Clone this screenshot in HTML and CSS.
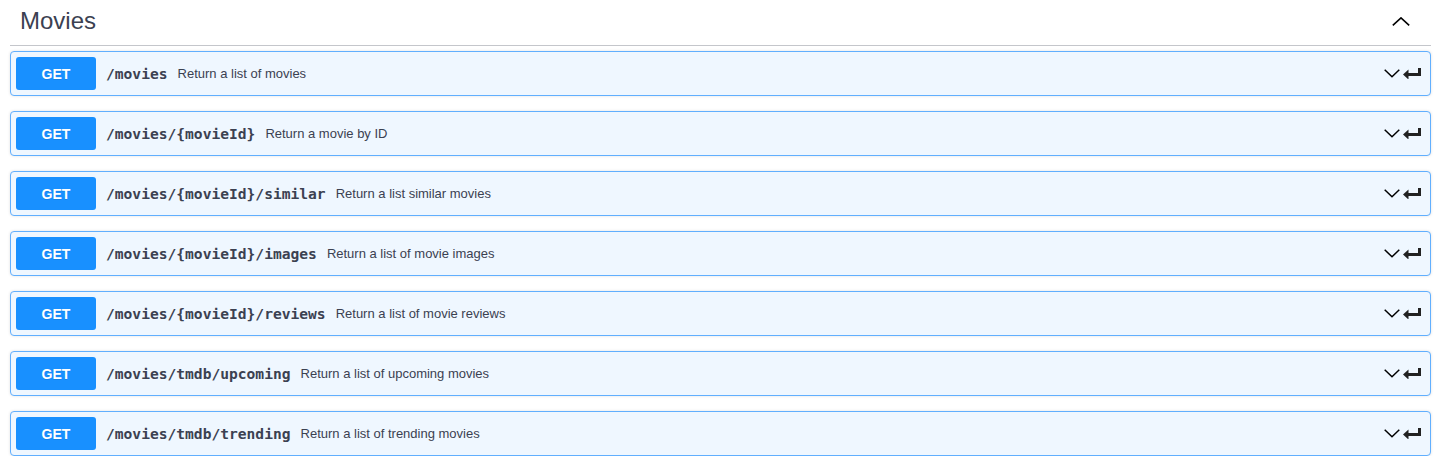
FILE: index.html
```html
<!DOCTYPE html>
<html lang="en">
<head>
<meta charset="utf-8">
<title>Movies</title>
<link rel="stylesheet" href="styles.css">
</head>
<body>
<div class="tag-section">
  <h3 class="tag-header">
    <span class="tag-name">Movies</span>
    <span class="tag-toggle">
      <svg width="18" height="9" viewBox="0 0 18 9"><polyline points="0.8,8.3 9,0.9 17.2,8.3" fill="none" stroke="#000" stroke-width="1.6"/></svg>
    </span>
  </h3>
  <div class="ops">
    <div class="opblock"><div class="summary"><span class="method">GET</span><span class="path">/movies</span><span class="desc">Return a list of movies</span><span class="controls"><svg class="chev" width="16" height="9" viewBox="0 0 16 9"><polyline points="0.7,0.8 8,7.8 15.3,0.8" fill="none" stroke="#000" stroke-width="1.5"/></svg><svg class="ret" width="18" height="11" viewBox="0 0 18 11"><path d="M15 0h3v8H15zM5 5h13v3H5zM0 6.5L5.5 1.5V11.5z" fill="#222"/></svg></span></div></div>
    <div class="opblock"><div class="summary"><span class="method">GET</span><span class="path">/movies/{movieId}</span><span class="desc">Return a movie by ID</span><span class="controls"><svg class="chev" width="16" height="9" viewBox="0 0 16 9"><polyline points="0.7,0.8 8,7.8 15.3,0.8" fill="none" stroke="#000" stroke-width="1.5"/></svg><svg class="ret" width="18" height="11" viewBox="0 0 18 11"><path d="M15 0h3v8H15zM5 5h13v3H5zM0 6.5L5.5 1.5V11.5z" fill="#222"/></svg></span></div></div>
    <div class="opblock"><div class="summary"><span class="method">GET</span><span class="path">/movies/{movieId}/similar</span><span class="desc">Return a list similar movies</span><span class="controls"><svg class="chev" width="16" height="9" viewBox="0 0 16 9"><polyline points="0.7,0.8 8,7.8 15.3,0.8" fill="none" stroke="#000" stroke-width="1.5"/></svg><svg class="ret" width="18" height="11" viewBox="0 0 18 11"><path d="M15 0h3v8H15zM5 5h13v3H5zM0 6.5L5.5 1.5V11.5z" fill="#222"/></svg></span></div></div>
    <div class="opblock"><div class="summary"><span class="method">GET</span><span class="path">/movies/{movieId}/images</span><span class="desc">Return a list of movie images</span><span class="controls"><svg class="chev" width="16" height="9" viewBox="0 0 16 9"><polyline points="0.7,0.8 8,7.8 15.3,0.8" fill="none" stroke="#000" stroke-width="1.5"/></svg><svg class="ret" width="18" height="11" viewBox="0 0 18 11"><path d="M15 0h3v8H15zM5 5h13v3H5zM0 6.5L5.5 1.5V11.5z" fill="#222"/></svg></span></div></div>
    <div class="opblock"><div class="summary"><span class="method">GET</span><span class="path">/movies/{movieId}/reviews</span><span class="desc">Return a list of movie reviews</span><span class="controls"><svg class="chev" width="16" height="9" viewBox="0 0 16 9"><polyline points="0.7,0.8 8,7.8 15.3,0.8" fill="none" stroke="#000" stroke-width="1.5"/></svg><svg class="ret" width="18" height="11" viewBox="0 0 18 11"><path d="M15 0h3v8H15zM5 5h13v3H5zM0 6.5L5.5 1.5V11.5z" fill="#222"/></svg></span></div></div>
    <div class="opblock"><div class="summary"><span class="method">GET</span><span class="path">/movies/tmdb/upcoming</span><span class="desc">Return a list of upcoming movies</span><span class="controls"><svg class="chev" width="16" height="9" viewBox="0 0 16 9"><polyline points="0.7,0.8 8,7.8 15.3,0.8" fill="none" stroke="#000" stroke-width="1.5"/></svg><svg class="ret" width="18" height="11" viewBox="0 0 18 11"><path d="M15 0h3v8H15zM5 5h13v3H5zM0 6.5L5.5 1.5V11.5z" fill="#222"/></svg></span></div></div>
    <div class="opblock"><div class="summary"><span class="method">GET</span><span class="path">/movies/tmdb/trending</span><span class="desc">Return a list of trending movies</span><span class="controls"><svg class="chev" width="16" height="9" viewBox="0 0 16 9"><polyline points="0.7,0.8 8,7.8 15.3,0.8" fill="none" stroke="#000" stroke-width="1.5"/></svg><svg class="ret" width="18" height="11" viewBox="0 0 18 11"><path d="M15 0h3v8H15zM5 5h13v3H5zM0 6.5L5.5 1.5V11.5z" fill="#222"/></svg></span></div></div>
  </div>
</div>
</body>
</html>
```

FILE: styles.css
```css
html, body {
  margin: 0;
  padding: 0;
  background: #fff;
}

body {
  font-family: "Liberation Sans", Arial, sans-serif;
  color: #3b4151;
}

.tag-section {
  margin: 0 10px;
}

.tag-header {
  display: flex;
  align-items: center;
  margin: 0 0 5px;
  padding: 7px 21px 10px 10px;
  border-bottom: 1px solid #c4c6cb;
  font-size: 24px;
  font-weight: normal;
  line-height: 28px;
  color: #3b4151;
}

.tag-name {
  flex: 1;
}

.tag-toggle {
  display: flex;
  align-items: center;
  height: 28px;
}

.tag-toggle svg {
  display: block;
  margin-top: 1px;
}

.ops {
  display: flex;
  flex-direction: column;
  gap: 15px;
}

.opblock {
  border: 1px solid #61affe;
  border-radius: 4px;
  background: #eff7ff;
  box-shadow: 0 0 3px rgba(0, 0, 0, 0.12);
}

.summary {
  display: flex;
  align-items: center;
  padding: 5px;
}

.method {
  display: flex;
  align-items: center;
  justify-content: center;
  width: 80px;
  height: 33px;
  border-radius: 3px;
  background: #1890ff;
  color: #fff;
  font-size: 14px;
  font-weight: bold;
  text-shadow: 0 1px 0 rgba(0, 0, 0, 0.1);
}

.path {
  padding: 0 10px;
  font-family: "DejaVu Sans Mono", monospace;
  font-weight: bold;
  font-size: 14.6px;
  color: #3b4151;
}

.desc {
  font-size: 13px;
  color: #3b4151;
}

.controls {
  display: flex;
  align-items: center;
  margin-left: auto;
  padding-right: 4px;
  gap: 3px;
}

.controls svg {
  display: block;
}

.chev {
  margin-top: -1px;
}
```
